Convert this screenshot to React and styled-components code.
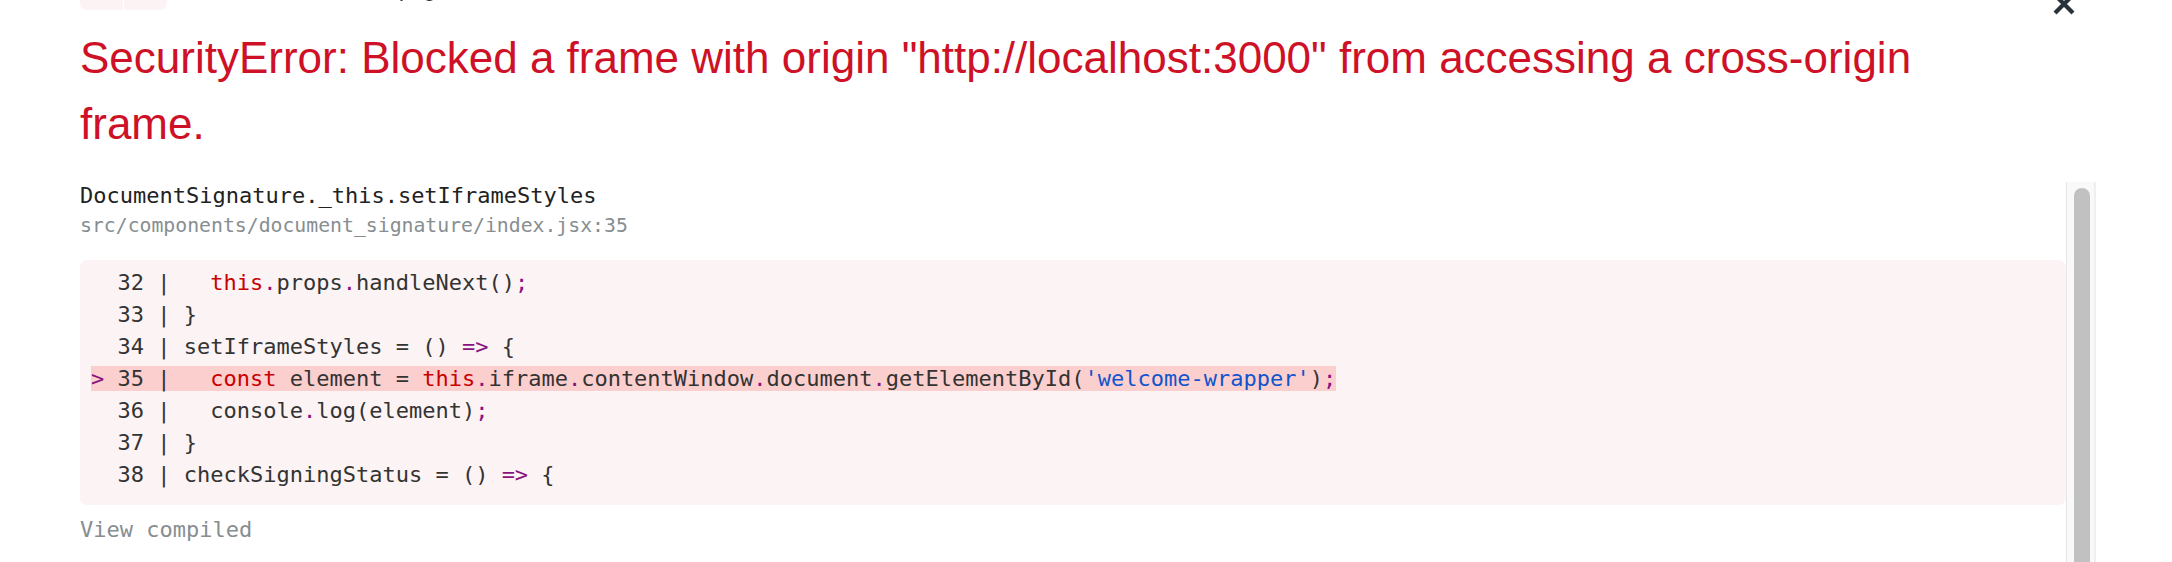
import React from "react";
import styled, { createGlobalStyle } from "styled-components";

const GlobalStyle = createGlobalStyle`
  html, body {
    margin: 0;
    padding: 0;
    background: #ffffff;
    overflow: hidden;
  }
  body {
    font-family: "Liberation Sans", Arial, sans-serif;
  }
`;

const Overlay = styled.div`
  position: relative;
  box-sizing: border-box;
  width: 2172px;
  height: 562px;
  padding: 0 76px 0 80px;
  display: flex;
  flex-direction: column;
  overflow: hidden;
`;

const CloseButton = styled.div`
  position: absolute;
  top: -7px;
  right: 97px;
  width: 22px;
  height: 22px;
  color: #293238;
`;

const Nav = styled.div`
  display: flex;
  align-items: flex-end;
  height: 40px;
  margin-top: -30px;
  margin-bottom: 15px;
  flex: 0 0 auto;
`;

const NavButton = styled.button`
  width: 43px;
  height: 40px;
  border: none;
  padding: 0;
  margin: 0 ${({ $side }) => ($side === "left" ? "1px" : "0")} 0 0;
  background: #fcf3f4;
  border-radius: ${({ $side }) => ($side === "left" ? "0 0 0 7px" : "0 0 7px 0")};
`;

const NavText = styled.span`
  margin: 0 0 5px 40px;
  font-size: 22px;
  line-height: 33px;
  color: #293238;
`;

const Title = styled.div`
  flex: 0 0 auto;
  margin: 0 0 24px;
  padding-right: 140px;
  font-size: 44px;
  line-height: 66px;
  color: #ce1126;
  white-space: pre-wrap;
`;

const Body = styled.div`
  flex: 1;
  min-height: 0;
  display: flex;
`;

const Frames = styled.div`
  flex: 1;
  min-width: 0;
  font-family: "DejaVu Sans Mono", Menlo, monospace;
  font-size: 22px;
`;

const FnName = styled.div`
  line-height: 30px;
  color: #222222;
`;

const FilePath = styled.div`
  font-size: 19.8px;
  line-height: 30px;
  color: #878e91;
`;

const CodeBlock = styled.pre`
  margin: 19px 0 10px;
  padding: 7px 11px 14px;
  background: #fcf3f4;
  border-radius: 7px;
  font-family: inherit;
  font-size: 22px;
  line-height: 32px;
  color: #333333;
  white-space: pre;
`;

const CodeLine = styled.div`
  height: 32px;
`;

const Marked = styled.span`
  background: #fccfcf;
`;

const Tok = styled.span`
  color: ${({ $kind }) =>
    ({
      kw: "#c80000",
      str: "#1155cc",
      punct: "#881280",
    })[$kind] || "inherit"};
`;

const ViewCompiled = styled.div`
  line-height: 30px;
  color: #878e91;
`;

const Track = styled.div`
  width: 30px;
  box-sizing: border-box;
  margin-top: 1px;
  padding: 6px 4px 0 7px;
  background: #f9f9f9;
  border-left: 1px solid #e6e6e6;
  border-right: 2px solid #efefef;
  display: flex;
`;

const Thumb = styled.div`
  flex: 1;
  background: #c1c1c1;
  border-radius: 8px 8px 0 0;
`;

const lines = [
  [32, "  this.props.handleNext();"],
  [33, "}"],
  [34, "setIframeStyles = () => {"],
  [35, "  const element = this.iframe.contentWindow.document.getElementById('welcome-wrapper');", true],
  [36, "  console.log(element);"],
  [37, "}"],
  [38, "checkSigningStatus = () => {"],
];

function kindOf(part) {
  if (part === "this" || part === "const") return "kw";
  if (part.startsWith("'")) return "str";
  if (part === "." || part === ";" || part === "=>" || part === ">") return "punct";
  return null;
}

function highlight(src) {
  return src
    .split(/(\bthis\b|\bconst\b|'[^']*'|=>|\.|;)/)
    .filter(Boolean)
    .map((part, i) => (
      <Tok key={i} $kind={kindOf(part)}>
        {part}
      </Tok>
    ));
}

function Line({ num, src, marked }) {
  const body = (
    <>
      {marked ? <Tok $kind="punct">{">"}</Tok> : " "}
      {` ${num} | `}
      {highlight(src)}
    </>
  );
  return <CodeLine>{marked ? <Marked>{body}</Marked> : body}</CodeLine>;
}

export default function App() {
  return (
    <>
      <GlobalStyle />
      <Overlay>
        <CloseButton>
          <svg width="22" height="22" viewBox="0 0 22 22">
            <path d="M2 2 L20 20 M20 2 L2 20" stroke="currentColor" strokeWidth="4.2" fill="none" />
          </svg>
        </CloseButton>
        <Nav>
          <NavButton $side="left" />
          <NavButton $side="right" />
          <NavText>1 of 2 errors on the page</NavText>
        </Nav>
        <Title>
          SecurityError: Blocked a frame with origin "http://localhost:3000" from accessing a cross-origin frame.
        </Title>
        <Body>
          <Frames>
            <FnName>DocumentSignature._this.setIframeStyles</FnName>
            <FilePath>src/components/document_signature/index.jsx:35</FilePath>
            <CodeBlock>
              {lines.map(([num, src, marked]) => (
                <Line key={num} num={num} src={src} marked={marked} />
              ))}
            </CodeBlock>
            <ViewCompiled>View compiled</ViewCompiled>
          </Frames>
          <Track>
            <Thumb />
          </Track>
        </Body>
      </Overlay>
    </>
  );
}
